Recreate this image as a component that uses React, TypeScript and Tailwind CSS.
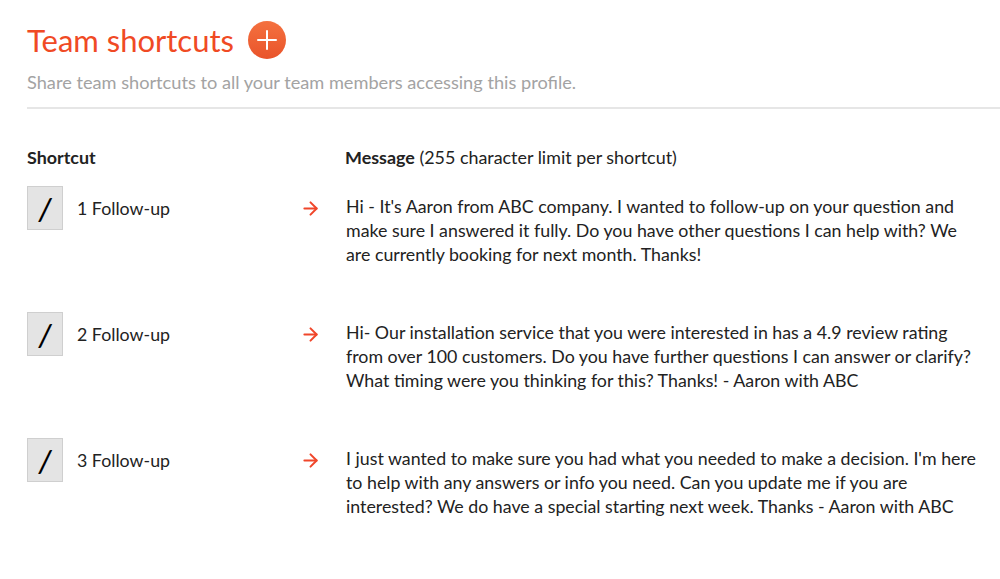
import { ArrowRight } from "lucide-react";

const rows = [
  {
    name: "1 Follow-up",
    lines: [
      "Hi - It's Aaron from ABC company. I wanted to follow-up on your question and",
      "make sure I answered it fully. Do you have other questions I can help with? We",
      "are currently booking for next month. Thanks!",
    ],
  },
  {
    name: "2 Follow-up",
    lines: [
      "Hi- Our installation service that you were interested in has a 4.9 review rating",
      "from over 100 customers. Do you have further questions I can answer or clarify?",
      "What timing were you thinking for this? Thanks! - Aaron with ABC",
    ],
  },
  {
    name: "3 Follow-up",
    lines: [
      "I just wanted to make sure you had what you needed to make a decision. I'm here",
      "to help with any answers or info you need. Can you update me if you are",
      "interested? We do have a special starting next week. Thanks - Aaron with ABC",
    ],
  },
];

function ShortcutRow({ name, lines }: { name: string; lines: string[] }) {
  return (
    <div className="flex items-start h-[126px]">
      <div className="flex w-[273px] items-center">
        <div className="flex h-[44px] w-[36px] items-center justify-center border border-[#cfcfcf] bg-[#e4e4e4] text-[31px] font-medium leading-none text-black italic">
          /
        </div>
        <span className="ml-[14px] text-[17.8px] text-[#222]">{name}</span>
      </div>
      <div className="flex h-[44px] w-[46px] items-center">
        <ArrowRight size={21} strokeWidth={2.3} className="text-[#f0462a]" />
      </div>
      <div className="pt-[8px] text-[17.8px] leading-[24px] text-[#222]">
        {lines.map((l) => (
          <div key={l} className="whitespace-nowrap">
            {l}
          </div>
        ))}
      </div>
    </div>
  );
}

export default function App() {
  return (
    <div
      className="min-h-[579px] bg-white pl-[27px] pt-[18px]"
      style={{ fontFamily: "Lato, 'Open Sans', sans-serif" }}
    >
      <div className="flex items-center gap-[14px]">
        <h1 className="text-[31px] leading-[44px] text-[#f04a24]">Team shortcuts</h1>
        <div className="flex h-[38px] w-[38px] items-center justify-center rounded-full bg-gradient-to-b from-[#f4713f] to-[#e9532a]">
          <svg width="22" height="22" viewBox="0 0 22 22" fill="none" stroke="white" strokeWidth="2" strokeLinecap="round">
            <line x1="11" y1="2" x2="11" y2="20" />
            <line x1="2" y1="11" x2="20" y2="11" />
          </svg>
        </div>
      </div>
      <p className="mt-[8px] text-[18.2px] leading-[24px] text-[#a3a3a3]">
        Share team shortcuts to all your team members accessing this profile.
      </p>
      <div className="mt-[13px] h-[2px] bg-[#e6e6e6]" />

      <div className="mt-[36px] flex text-[17.9px] leading-[24px] text-[#222]">
        <div className="w-[318px] font-bold">Shortcut</div>
        <div>
          <span className="font-bold">Message</span> (255 character limit per shortcut)
        </div>
      </div>

      <div className="mt-[17px]">
        {rows.map((r) => (
          <ShortcutRow key={r.name} name={r.name} lines={r.lines} />
        ))}
      </div>
    </div>
  );
}
